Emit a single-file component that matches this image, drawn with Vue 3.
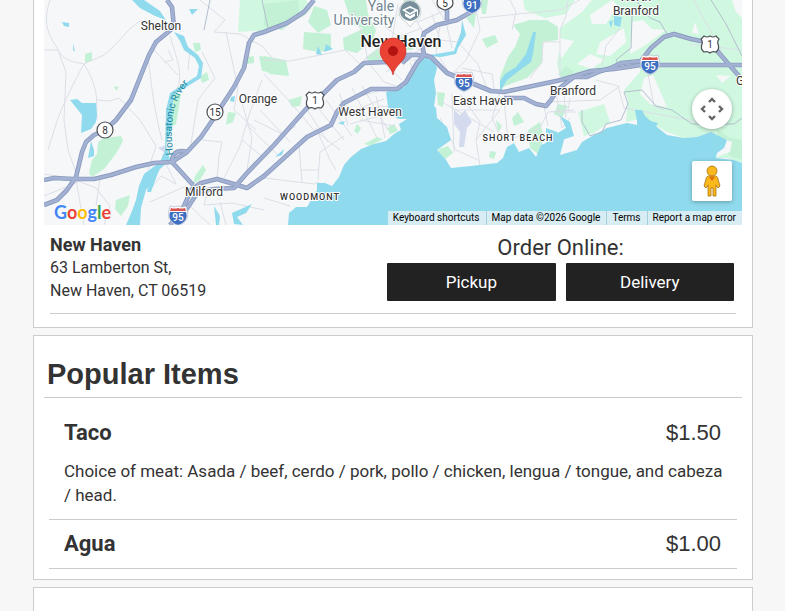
<script setup>
import { ref } from "vue";

const items = ref([
  {
    id: 1,
    name: "Taco",
    price: "$1.50",
    text: "Choice of meat: Asada / beef, cerdo / pork, pollo / chicken, lengua / tongue, and cabeza / head.",
  },
  { id: 2, name: "Agua", price: "$1.00", text: "" },
]);

// large woods
const woods = [
  "M240 0H306L312 8 304 16 288 24 270 31H254L238 32Z",
  "M523 0H575L566 14 545 18 525 10Z",
  "M560 28L582 12 592 0H742V163L727 158 717 158 727 140 711 132 697 137 684 138 667 132 657 126 645 118 626 122 628 100 624 90 640 72 640 62 617 64 592 71 561 80 557 64 560 45Z",
  "M578 112L604 104 610 122 594 133 584 136Z",
];

// smaller parks
const parks = [
  "M264 4L298 0 300 16 282 30 264 26Z",
  "M314 6L327 10 331 25 318 33 308 22Z",
  "M304 32L331 34 331 50 318 52 303 49Z",
  "M343 38L365 28 366 45 357 53 344 50Z",
  "M344 0H366L368 14 376 30 372 45 362 28 352 24Z",
  "M365 58L378 48 382 62 370 62Z",
  "M259 56L274 58V73L262 71Z",
  "M264 56L286 60 289 76 270 74 264 70Z",
  "M288 100L302 96 300 106 292 107Z",
  "M247 57L254 56 254 63 247 64Z",
  "M193 43H200L201 50 195 52Z",
  "M85 54L92 52V60L85 63Z",
  "M114 86L119 87 116 91Z",
  "M200 76L207 72 209 80 202 83Z",
  "M173 93L181 94 178 112 176 124 171 127 170 110Z",
  "M104 138L121 136 123 141 117 152 108 164 104 169 92 177 89 173 92 160 97 154 98 142Z",
  "M203 165L206 170 200 180 193 184 195 176Z",
  "M116 200L130 195 128 206 121 216 115 209Z",
  "M228 112L236 113 233 122 226 125Z",
  "M357 124L361 128 358 134 354 131Z",
  "M387 128L394 124 398 131 390 134Z",
  "M364 144L377 137 383 139 370 146Z",
  "M396 38L406 37 417 44 412 50 398 50 393 45Z",
  "M482 39L495 35 498 42 487 48Z",
  "M437 92L445 93 443 107 438 105Z",
  "M439 149L448 146 453 153 444 160 437 156Z",
  "M490 151L496 152 494 159 489 157Z",
  "M404 0H416L410 18 398 16Z",
  "M466 18L476 12 474 28Z",
  "M480 0H488L486 14 482 14Z",
  "M513 25L530 20 547 20 558 27 558 40 543 42 542 63 527 78 500 88 500 77 508 57 515 47 520 34Z",
  "M512 118L518 112 524 122 514 126Z",
  "M496 120L502 126 498 133Z",
  "M528 130L540 122 544 138 538 154 530 148Z",
  "M558 104L568 106 562 118 554 114Z",
  "M716 128L730 138 742 140 742 160 730 156 720 146Z",
  "M602 6L618 16 606 18Z",
  "M558 74L566 66 574 72 564 79Z",
];

// open ground inside the eastern woods
const clearings = [
  "M590 15L612 0 618 6 606 24 592 24Z",
  "M559 38L574 41 562 58 558 50Z",
  "M600 42L614 34 624 28 626 42 610 56 596 54Z",
  "M632 22L643 20 652 29 666 30 644 46 630 54Z",
  "M577 64L590 54 604 60 592 69Z",
  "M644 78L653 75 667 107 650 104 640 94Z",
  "M695 22L699 34 692 33Z",
  "M716 75L731 76 722 83Z",
  "M732 0H742V18L736 12Z",
  "M722 138L732 142 730 152 716 157Z",
];

const lakes = [
  "M132 0H144L160 11 166 20 155 16 140 8Z",
  "M174 32L184 36 188 47 198 55 203 63 201 78 188 86 174 94 172 110 171 130 166 145 170 160 160 169 154 180 146 190 141 208 140 225H126L132 211 136 200 139 186 144 174 160 162 165 150 166 110 170 93 184 84 197 76 199 66 195 58 184 50 180 41Z",
  "M189 9H198L192 15Z",
  "M62 22L69 23 69 27 64 26Z",
  "M73 43L75 52 73 50Z",
  "M70 100L77 99 82 103 96 103 97 115 96 122 91 129 81 133 82 115Z",
  "M91 141L94 150 94 156 88 158Z",
  "M152 172L160 167 155 181 151 192 147 192Z",
  "M214 206L220 216 219 225 216 225Z",
  "M232 213L252 204 246 213 237 217 243 225 234 224Z",
  "M533 32L536 32 533 54 531 62 520 70 507 80 500 92 500 81 505 74 516 67 526 54Z",
  "M462 20L466 35 458 48 456 54 441 57 424 56 454 51 461 32Z",
  "M614 16L622 17 620 27 614 25Z",
  "M609 22L613 20 611 28Z",
  "M635 110L642 110 647 120 658 123 654 130 638 126Z",
  "M560 116L570 122 574 136 562 140 556 134 566 128Z",
  "M318 46L322 55 316 54Z",
  "M326 44L333 49 324 52Z",
  "M338 123L345 121 343 125Z",
  "M275 157L284 149 282 155Z",
  "M231 97L235 96 234 102 230 101Z",
];

const minorRoads = [
  "M50 0C40 30 54 40 58 50C66 64 80 62 84 64C100 90 96 102 97 120",
  "M44 50H58L66 72L64 120 68 150 78 178",
  "M84 64L104 55C118 44 128 28 140 21L176 26",
  "M84 64C74 82 66 98 58 118L48 150",
  "M97 100L110 101 119 98 140 120 156 146 148 170",
  "M148 56C152 90 154 110 162 140",
  "M170 36C178 62 186 82 172 95",
  "M154 50L178 75M168 50L173 60 164 62M180 36L190 50 188 70",
  "M200 0L225 20 214 32 240 34 262 46 274 60",
  "M226 32L238 88 234 110 256 130",
  "M202 52L215 78 198 100 190 150",
  "M264 60L290 61 345 50 360 64",
  "M264 74L292 104 312 128 340 150",
  "M240 96L252 138 246 176",
  "M262 80L250 112 240 146 224 178",
  "M254 120L282 134 296 126M246 124L278 155M260 110L290 142M242 140L264 158",
  "M165 162L176 184 161 176 148 192",
  "M202 140L222 142 219 156 217 180",
  "M44 174L70 178 96 188 110 206 104 225",
  "M76 180L84 225M100 178L96 206M44 196L78 182",
  "M208 190L204 205 232 203 264 210",
  "M150 202L186 186M220 202L226 225M190 206L210 225",
  "M264 178L314 184 318 182M264 198L290 206",
  "M299 145L302 182M316 128L330 160 336 170M344 136L320 152 318 180M300 170L318 170",
  "M306 108L328 142M318 108L344 140M326 100L352 136M340 94L348 126",
  "M352 88L377 138M362 86L388 130M344 114L384 99M350 124L394 112M340 102L378 91",
  "M376 96L385 138M366 108L390 106M360 120L395 126",
  "M378 0L386 28 410 44 426 54M398 4L392 40 396 64",
  "M354 10L364 40 368 62 384 82 396 86M364 60L390 40 422 28",
  "M370 42L394 60 416 60M374 54L402 80M386 72L422 48M410 62L416 80",
  "M404 0L416 20 424 34 424 54M432 0L446 22 452 48M446 10L418 22",
  "M432 14L440 40 458 42 478 64 488 92M440 25L436 52 450 74",
  "M474 0L480 30 466 60 452 74M462 68L492 74 494 90",
  "M452 94L454 152M454 110H500L476 140 480 166M442 102L494 132",
  "M460 94L480 122 476 140M500 92L492 118 502 140M440 118L456 150 478 160",
  "M504 100L508 140 540 128 548 112 574 110",
  "M480 18L518 14 560 10 580 0M510 0L516 12 512 30",
  "M568 0L566 16 560 30 560 80M543 42H560M543 42L542 62 530 78",
  "M544 106L548 126M556 92L562 128 570 118M550 102L600 100 620 86",
  "M553 112H576M564 94L566 118M570 98L568 110",
  "M648 74L654 106 664 110",
  "M690 44L742 50M694 0L726 60M620 28L606 46 602 66",
  "M596 80L618 86 624 108 700 122",
];

const greyRoads = [
  "M632 16L631 48 616 60 620 68",
  "M636 0L650 18 660 22 667 34",
  "M711 0L726 24 742 56",
  "M582 110L582 122 590 136 602 132 606 124 621 120 628 104 624 92 642 90 656 106 672 110 692 124 734 124 742 118",
  "M262 0L268 28M210 0L204 30",
];

const highways = [
  "M167 0L172 7 174 27 167 33 156 42 149 55 143 70 131 100 116 120 105 130 94 135 86 142 82 152 76 177 67 190 57 200 44 205",
  "M314 0L304 12 287 23 264 32 254 35 249 43 244 68 234 87 221 107 214 118 201 137 187 152 172 162 154 163 136 167 111 175 94 179H74L54 178 44 180",
  "M172 162L193 185M172 162C172 150 182 150 187 152",
  "M170 225L184 206 191 190 201 183 217 179 247 188 264 176 284 158 307 137 331 125 337 112 344 103 371 89 397 89 406 82 417 63 424 55 431 57 447 73 464 80 491 91 504 92 561 80 591 71 614 69 641 65 742 65",
  "M176 225L190 204 198 192 214 189 234 188 247 173 274 145 307 108 322 95 337 80 354 72 364 63 387 62 407 55 424 55",
  "M424 55L422 42 424 33 437 25 457 20 471 12 478 0",
  "M402 63L412 54",
  "M447 20V8",
  "M504 98L524 98 536 104 546 106 551 100 557 90 574 77 587 77 601 71 611 68 621 63 641 61 651 48 664 37 674 34 691 39 711 43 719 53 739 76",
];

const towns = [
  { name: "Shelton", x: 161, y: 30 },
  { name: "Orange", x: 258, y: 103 },
  { name: "West Haven", x: 370, y: 116 },
  { name: "East Haven", x: 483, y: 105 },
  { name: "Branford", x: 573, y: 95 },
  { name: "North", x: 636, y: 1 },
  { name: "Branford", x: 636, y: 15 },
  { name: "Milford", x: 204, y: 196 },
  { name: "G", x: 740, y: 85 },
];

const circles = [
  { num: "8", x: 105, y: 130 },
  { num: "15", x: 215, y: 112 },
];
const usRoutes = [
  { num: "1", x: 315, y: 100 },
  { num: "1", x: 710, y: 44 },
];
const interstates = [
  { num: "95", x: 464, y: 82 },
  { num: "95", x: 650, y: 65 },
  { num: "95", x: 178, y: 216 },
  { num: "91", x: 472, y: 4 },
];
</script>

<template>
  <main>
    <section class="card locations">
      <div class="map">
        <svg
          class="map-canvas"
          viewBox="44 0 698 225"
          preserveAspectRatio="xMidYMid slice"
          role="img"
          aria-label="Map"
        >
          <rect x="44" width="698" height="225" fill="#f6f7f9" />
          <path v-for="d in woods" :key="d" :d="d" class="woods" />
          <path v-for="d in parks" :key="d" :d="d" class="park" />
          <path v-for="d in clearings" :key="d" :d="d" class="clearing" />
          <path
            d="M454 110L460 115 465 110 472 122 467 128 464 147 459 147 460 132 454 124Z M158 148L166 145 165 153Z"
            fill="#d5dbee"
          />
          <path v-for="d in minorRoads" :key="d" :d="d" class="minor" />
          <path v-for="d in lakes" :key="d" :d="d" class="water" />
          <path
            class="water"
            d="M288 225L289 213 296 207 307 207 317 190 317 183 325 183 332 186 339 177 344 165 351 157 361 149 374 144 386 141 394 134 401 130 399 124 407 119 398 119 389 112 387 100 386 92 404 87 414 72 421 60 426 57 434 62 437 68 434 80 436 93 434 106 436 108 437 118 447 127 451 140 437 150 446 160 451 168 471 166 497 163 503 158 507 147 514 143 519 152 529 148 536 157 541 145 546 143 546 128 557 132 564 140 560 155 577 150 582 142 594 135 607 128 627 123 637 125 637 112 644 115 657 127 667 135 684 138 697 137 711 132 727 140 724 148 717 153 716 158 734 160 742 163V225Z"
          />
          <path v-for="d in greyRoads" :key="d" :d="d" class="grey" />
          <path v-for="d in highways" :key="d" :d="d" class="casing" />
          <path v-for="d in highways" :key="d + 'i'" :d="d" class="highway" />

          <text
            v-for="t in towns"
            :key="t.name + t.y"
            :x="t.x"
            :y="t.y"
            class="town"
          >
            {{ t.name }}
          </text>
          <text x="310" y="200" class="village">WOODMONT</text>
          <text x="518" y="141" class="village">SHORT BEACH</text>
          <text x="381" y="11" class="school">Yale</text>
          <text x="364" y="25" class="school">University</text>
          <text x="401" y="47" class="city">New Haven</text>
          <path id="river" d="M173 155C170 122 172 100 190 82" fill="none" />
          <text class="river"><textPath href="#river">Housatonic River</textPath></text>

          <g v-for="c in circles" :key="c.num">
            <circle :cx="c.x" :cy="c.y" r="8" class="sign" />
            <text :x="c.x" :y="c.y + 4" class="sign-num">{{ c.num }}</text>
          </g>
          <g
            v-for="r in usRoutes"
            :key="r.x"
            :transform="`translate(${r.x} ${r.y})`"
          >
            <path
              class="sign"
              d="M-6-8Q-3-6 0-8Q3-6 6-8L9-5Q7-2 8 0Q10 5 6 8Q2 7 0 9Q-2 7-6 8Q-10 5-8 0Q-7-2-9-5Z"
            />
            <text y="4" class="sign-num">{{ r.num }}</text>
          </g>
          <g transform="translate(445 2)">
            <path class="sign" d="M-8-8H8Q7-3 8 1Q8 6 0 8Q-8 6-8 1Q-7-3-8-8Z" />
            <text y="5" class="sign-num">5</text>
          </g>
          <g
            v-for="s in interstates"
            :key="s.x"
            :transform="`translate(${s.x} ${s.y})`"
          >
            <path
              d="M-8-10Q-4-8 0-10Q4-8 8-10Q14 5 0 10Q-14 5-8-10Z"
              fill="#fff"
              stroke="#a5aec5"
              stroke-width="0.6"
            />
            <path d="M-8-4H8Q11 5 0 9Q-11 5-8-4Z" fill="#3e6fc1" />
            <path d="M-7-8Q-3-7 0-8Q3-7 7-8L8-5H-8Z" fill="#d9544f" />
            <text y="5" class="interstate-num">{{ s.num }}</text>
          </g>

          <!-- university pin -->
          <path
            d="M410 27Q407 22 402 19A11 11 0 1 1 418 19Q413 22 410 27Z"
            fill="#fff"
            stroke="#cdd3d6"
          />
          <circle cx="410" cy="11" r="10" fill="#78909c" />
          <path
            d="M402 10L410 6 418 10V16H417V11L410 15Z M405 13L410 16 415 13V16L410 19 405 16Z"
            fill="#fff"
          />
          <path d="M405 10L410 8 415 10 410 13Z" fill="#78909c" />

          <!-- location marker -->
          <path
            d="M393 75C391 64 380 62 380 51A13 13 0 0 1 406 51C406 62 395 64 393 75Z"
            fill="#ea4335"
            stroke="#c5221f"
            stroke-width="0.6"
          />
          <circle cx="393" cy="51" r="5" fill="#b31412" />
        </svg>

        <a class="google" href="#" aria-label="Google">
          <span class="blue">G</span><span class="red">o</span
          ><span class="yellow">o</span><span class="blue">g</span
          ><span class="green">l</span><span class="red">e</span>
        </a>
        <div class="controls">
          <button class="camera" aria-label="Map camera controls">
            <svg width="24" height="24" viewBox="0 0 24 24">
              <path
                d="M9 5L12 2 15 5M9 19L12 22 15 19M5 9L2 12 5 15M19 9L22 12 19 15"
                fill="none"
                stroke="#666"
                stroke-width="2.4"
              />
            </svg>
          </button>
          <button class="pegman" aria-label="Street View">
            <svg width="18" height="32" viewBox="0 0 18 32">
              <g fill="#fbb81c" stroke="#a87313" stroke-width="0.8">
                <path
                  d="M5 11H13Q15 12 15 14L17 21 15 23 13 20V31H10V23H8V31H5V20L3 23 1 21 3 14Q3 12 5 11Z"
                />
                <circle cx="9" cy="6" r="5" />
              </g>
              <path d="M6 12H12L9 16Z" fill="#e8710a" />
            </svg>
          </button>
        </div>
        <div class="credits">
          <button>Keyboard shortcuts</button>
          <span>Map data ©2026 Google</span>
          <a href="#">Terms</a>
          <a href="#">Report a map error</a>
        </div>
      </div>

      <div class="location">
        <address>
          <strong>New Haven</strong>
          <span>63 Lamberton St,</span>
          <span>New Haven, CT 06519</span>
        </address>
        <div class="order">
          <p>Order Online:</p>
          <div class="order-links">
            <a href="#">Pickup</a>
            <a href="#">Delivery</a>
          </div>
        </div>
      </div>
    </section>

    <section class="card popular">
      <h2>Popular Items</h2>
      <ul>
        <li v-for="item in items" :key="item.id">
          <div class="item-head">
            <h3>{{ item.name }}</h3>
            <span class="price">{{ item.price }}</span>
          </div>
          <p v-if="item.text">{{ item.text }}</p>
        </li>
      </ul>
    </section>

    <section class="card next"></section>
  </main>
</template>

<style>
body {
  margin: 0;
  background: #f7f7f7;
}
</style>

<style scoped>
main {
  box-sizing: border-box;
  min-height: 100vh;
  padding: 0 32px 0 33px;
  display: flex;
  flex-direction: column;
  gap: 7px;
  font-family: Roboto, "Liberation Sans", sans-serif;
  font-size: 16px;
  color: #333;
}
.card {
  background: white;
  border: 1px solid #ccc;
  padding: 0 10px;
}
.locations {
  border-top: none;
}
.map {
  position: relative;
  height: 225px;
  overflow: hidden;
}
.map-canvas {
  display: block;
  width: 100%;
  height: 100%;
}
.woods {
  fill: #d0f8e0;
}
.park {
  fill: #c3f1d5;
}
.clearing {
  fill: #f6f7f9;
}
.water {
  fill: #90daee;
}
.minor {
  fill: none;
  stroke: #dcdfe7;
}
.grey {
  fill: none;
  stroke: #b3bfcf;
}
.casing {
  fill: none;
  stroke: #8b9bc0;
  stroke-width: 4.6;
  stroke-linejoin: round;
}
.highway {
  fill: none;
  stroke: #a3b2d3;
  stroke-width: 2.8;
  stroke-linejoin: round;
}
.map-canvas text {
  font-family: Roboto, sans-serif;
  text-anchor: middle;
  paint-order: stroke;
  stroke: white;
  stroke-width: 2px;
  stroke-linejoin: round;
}
.map-canvas .town {
  font-size: 12px;
  fill: #333;
}
.map-canvas .village {
  font-size: 9px;
  font-weight: 500;
  letter-spacing: 1px;
  fill: #333;
}
.map-canvas .school {
  font-size: 14px;
  fill: #71858f;
}
.map-canvas .city {
  font-size: 16px;
  font-weight: 500;
  fill: #222;
}
.map-canvas .river {
  font-size: 10px;
  fill: #1687a0;
  stroke: none;
  text-anchor: start;
}
.sign {
  fill: white;
  stroke: #4b4f54;
  stroke-width: 1.2;
}
.map-canvas .sign-num {
  font-size: 10px;
  fill: #333;
  stroke: none;
}
.map-canvas .interstate-num {
  font-size: 10px;
  font-weight: 500;
  fill: white;
  stroke: none;
}
.google {
  position: absolute;
  left: 10px;
  bottom: 1px;
  font-family: Lato, sans-serif;
  font-size: 18px;
  line-height: 24px;
  font-weight: 700;
  text-decoration: none;
  text-shadow: 0 0 2px white, 0 0 2px white;
}
.blue {
  color: #4285f4;
}
.red {
  color: #ea4335;
}
.yellow {
  color: #fbbc04;
}
.green {
  color: #34a853;
}
.controls {
  position: absolute;
  right: 10px;
  bottom: 24px;
  display: flex;
  flex-direction: column;
  gap: 32px;
}
.controls button {
  width: 40px;
  height: 40px;
  padding: 0;
  border: none;
  border-radius: 2px;
  background: white;
  box-shadow: 0 1px 4px rgb(0, 0, 0, 0.3);
  display: flex;
  align-items: center;
  justify-content: center;
  cursor: pointer;
}
.controls .camera {
  border-radius: 100%;
}
.credits {
  position: absolute;
  right: 0;
  bottom: 0;
  display: flex;
  font-size: 10px;
  line-height: 14px;
  white-space: nowrap;
}
.credits > * {
  padding: 0 6px 0 5px;
  border: none;
  background: rgb(245, 245, 245, 0.7);
  color: black;
  font: inherit;
  text-decoration: none;
}
.credits > * + * {
  border-left: 1px solid #a3cfdc;
}
.location {
  margin: 0 6px 13px;
  padding: 8px 0 11px;
  border-bottom: 1px solid #ccc;
  display: flex;
}
address {
  flex: 35;
  display: flex;
  flex-direction: column;
  font-style: normal;
  line-height: 23px;
}
address strong {
  font-size: 18px;
}
.order {
  flex: 36;
  padding: 0 2px 0 0;
  text-align: center;
}
.order p {
  margin: 0 0 1px;
  font-size: 22px;
  line-height: 29px;
}
.order-links {
  display: flex;
  gap: 10px;
}
.order-links a {
  flex: 1;
  border-radius: 1px;
  background: #222;
  color: white;
  font-size: 17px;
  line-height: 38px;
  text-decoration: none;
}
.popular {
  padding-bottom: 10px;
}
h2 {
  margin: 0;
  padding: 21px 3px 6px;
  border-bottom: 1px solid #ccc;
  font-family: "Liberation Sans", Arial, sans-serif;
  font-size: 29px;
  line-height: 34px;
}
ul {
  margin: 11px 5px 0;
  padding: 0;
  list-style: none;
}
li {
  padding: 9px 10px 9px 15px;
  border-bottom: 1px solid #ccc;
}
.item-head {
  display: flex;
  justify-content: space-between;
  padding-right: 6px;
  line-height: 30px;
  font-size: 22px;
}
h3 {
  margin: 0;
  font-size: 22px;
}
.price {
  font-family: "Liberation Sans", Arial, sans-serif;
}
li p {
  margin: 11px 0 3px;
  font-size: 17px;
  line-height: 24px;
}
.next {
  flex: 1;
  border-bottom: none;
}
</style>
